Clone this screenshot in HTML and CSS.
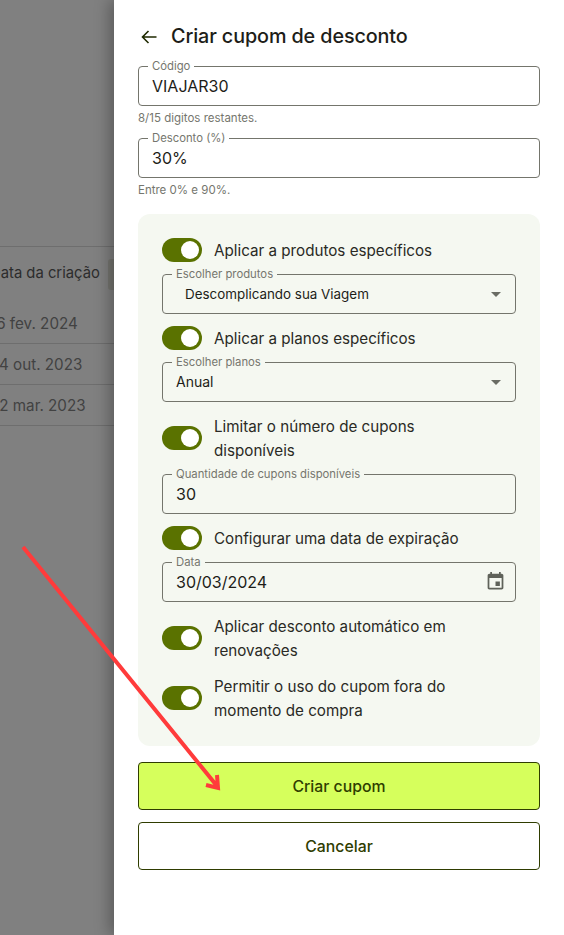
FILE: index.html
```html
<!DOCTYPE html>
<html lang="pt-BR">
<head>
<meta charset="utf-8">
<title>Criar cupom de desconto</title>
<link rel="stylesheet" href="styles.css">
</head>
<body>
<div class="page">
  <div class="backdrop">
    <div class="table">
      <div class="cell head"><span>Data da criação</span><i class="resizer"></i></div>
      <div class="cell">16 fev. 2024</div>
      <div class="cell">24 out. 2023</div>
      <div class="cell">22 mar. 2023</div>
    </div>
  </div>
  <aside class="drawer">
    <header class="title-row">
      <svg class="back" viewBox="0 0 16 14" width="16" height="14"><path d="M15.5 7H1.5M7.5 1L1.5 7l6 6" fill="none" stroke="#1f2a00" stroke-width="1.6"/></svg>
      <h1>Criar cupom de desconto</h1>
    </header>
    <div class="field"><span class="legend">Código</span><span class="value">VIAJAR30</span></div>
    <p class="help">8/15 digitos restantes.</p>
    <div class="field"><span class="legend">Desconto (%)</span><span class="value">30%</span></div>
    <p class="help">Entre 0% e 90%.</p>
    <section class="panel">
      <div class="row"><span class="switch"></span><span class="row-label">Aplicar a produtos específicos</span></div>
      <div class="field on-panel"><span class="legend">Escolher produtos</span><span class="value select indented">Descomplicando sua Viagem</span><span class="caret"></span></div>
      <div class="row"><span class="switch"></span><span class="row-label">Aplicar a planos específicos</span></div>
      <div class="field on-panel"><span class="legend">Escolher planos</span><span class="value select">Anual</span><span class="caret"></span></div>
      <div class="row"><span class="switch"></span><span class="row-label">Limitar o número de cupons disponíveis</span></div>
      <div class="field on-panel"><span class="legend">Quantidade de cupons disponíveis</span><span class="value">30</span></div>
      <div class="row"><span class="switch"></span><span class="row-label">Configurar uma data de expiração</span></div>
      <div class="field on-panel"><span class="legend">Data</span><span class="value">30/03/2024</span>
        <svg class="calendar" viewBox="0 0 24 24" width="21" height="21"><path d="M17 12h-5v5h5v-5zM16 1v2H8V1H6v2H5c-1.11 0-1.99.9-1.99 2L3 19c0 1.1.89 2 2 2h14c1.1 0 2-.9 2-2V5c0-1.1-.9-2-2-2h-1V1h-2zm3 18H5V8h14v11z" fill="#5f625a"/></svg>
      </div>
      <div class="row"><span class="switch"></span><span class="row-label">Aplicar desconto automático em renovações</span></div>
      <div class="row"><span class="switch"></span><span class="row-label">Permitir o uso do cupom fora do momento de compra</span></div>
    </section>
    <button class="btn primary">Criar cupom</button>
    <button class="btn">Cancelar</button>
  </aside>
  <svg class="pointer" viewBox="0 0 564 935" width="564" height="935"><path d="M23 547L217 786M217 775L218 788L206 785" fill="none" stroke="#ff3b3b" stroke-width="4"/></svg>
</div>
</body>
</html>
```
FILE: styles.css
```css
* { box-sizing: border-box; }
html, body { margin: 0; height: 100%; }
body { font-family: Inter, "Liberation Sans", sans-serif; color: #1d1d18; background: #fff; overflow: hidden; }
.page { position: relative; display: flex; width: 564px; height: 935px; overflow: hidden; }

.backdrop { width: 114px; flex: none; background: #808080; overflow: hidden; padding-top: 246px; }
.table { margin-left: -10px; width: 124px; color: #424242; font-size: 15.2px; }
.cell { height: 41px; line-height: 42px; border-bottom: 1px solid #6e6e6e; white-space: nowrap; }
.head { height: 57px; line-height: 52px; border-top: 1px solid #6e6e6e; border-bottom: 0; display: flex; justify-content: space-between; color: #2c2c2c; font-size: 14.8px; }
.resizer { width: 6px; height: 31px; margin-top: 12px; background: #757570; border-radius: 3px 0 0 3px; flex: none; }

.drawer { flex: 1; padding: 24px 24px 0; background: #fff; box-shadow: -5px 0 14px rgba(0, 0, 0, .28); position: relative; }
.title-row { display: flex; align-items: center; gap: 14px; height: 24px; padding-left: 3px; margin-bottom: 18px; }
.title-row h1 { margin: 0; font-size: 19.75px; font-weight: 500; line-height: 24px; letter-spacing: -.1px; color: #1d1d18; }
.back { flex: none; margin-top: 1px; }

.field { position: relative; height: 40px; border: 1px solid #74756c; border-radius: 4px; display: flex; align-items: center; padding: 0 13px; }
.legend { position: absolute; left: 9px; top: -8px; padding: 0 4px; font-size: 11.3px; line-height: 14px; color: #75766e; background: #fff; white-space: nowrap; }
.value { font-size: 16px; line-height: 24px; color: #1d1d18; }
.select { font-size: 14px; }
.indented { padding-left: 9px; font-size: 13.4px; }
.help { margin: 0; height: 32px; font-size: 11.5px; line-height: 24px; color: #75766e; }

.panel { margin-top: 4px; margin-bottom: 16px; padding: 24px; background: #f5f8f1; border-radius: 12px; display: flex; flex-direction: column; gap: 12px; }
.on-panel .legend { background: #f5f8f1; }
.row { display: flex; align-items: center; gap: 12px; font-size: 15.2px; line-height: 24px; color: #2a2a25; }
.row-label { max-width: 265px; margin: 1px 0 -1px; }
.switch { position: relative; flex: none; width: 40px; height: 24px; border-radius: 12px; background: #5a7200; }
.switch::after { content: ""; position: absolute; top: 3px; right: 3px; width: 18px; height: 18px; border-radius: 50%; background: #fff; }
.caret { position: absolute; right: 14px; top: 17px; border-left: 5px solid transparent; border-right: 5px solid transparent; border-top: 5px solid #6a6c64; }
.calendar { position: absolute; right: 9px; top: 8px; }

.btn { display: block; width: 100%; height: 48px; margin-bottom: 12px; padding: 2px 0 0; background: #fff; border: 1px solid #2f3d00; border-radius: 4px; font: 500 15.8px/24px Inter, "Liberation Sans", sans-serif; color: #2f3d00; }
.primary { background: #d6ff5c; }

.pointer { position: absolute; left: 0; top: 0; pointer-events: none; }
```
